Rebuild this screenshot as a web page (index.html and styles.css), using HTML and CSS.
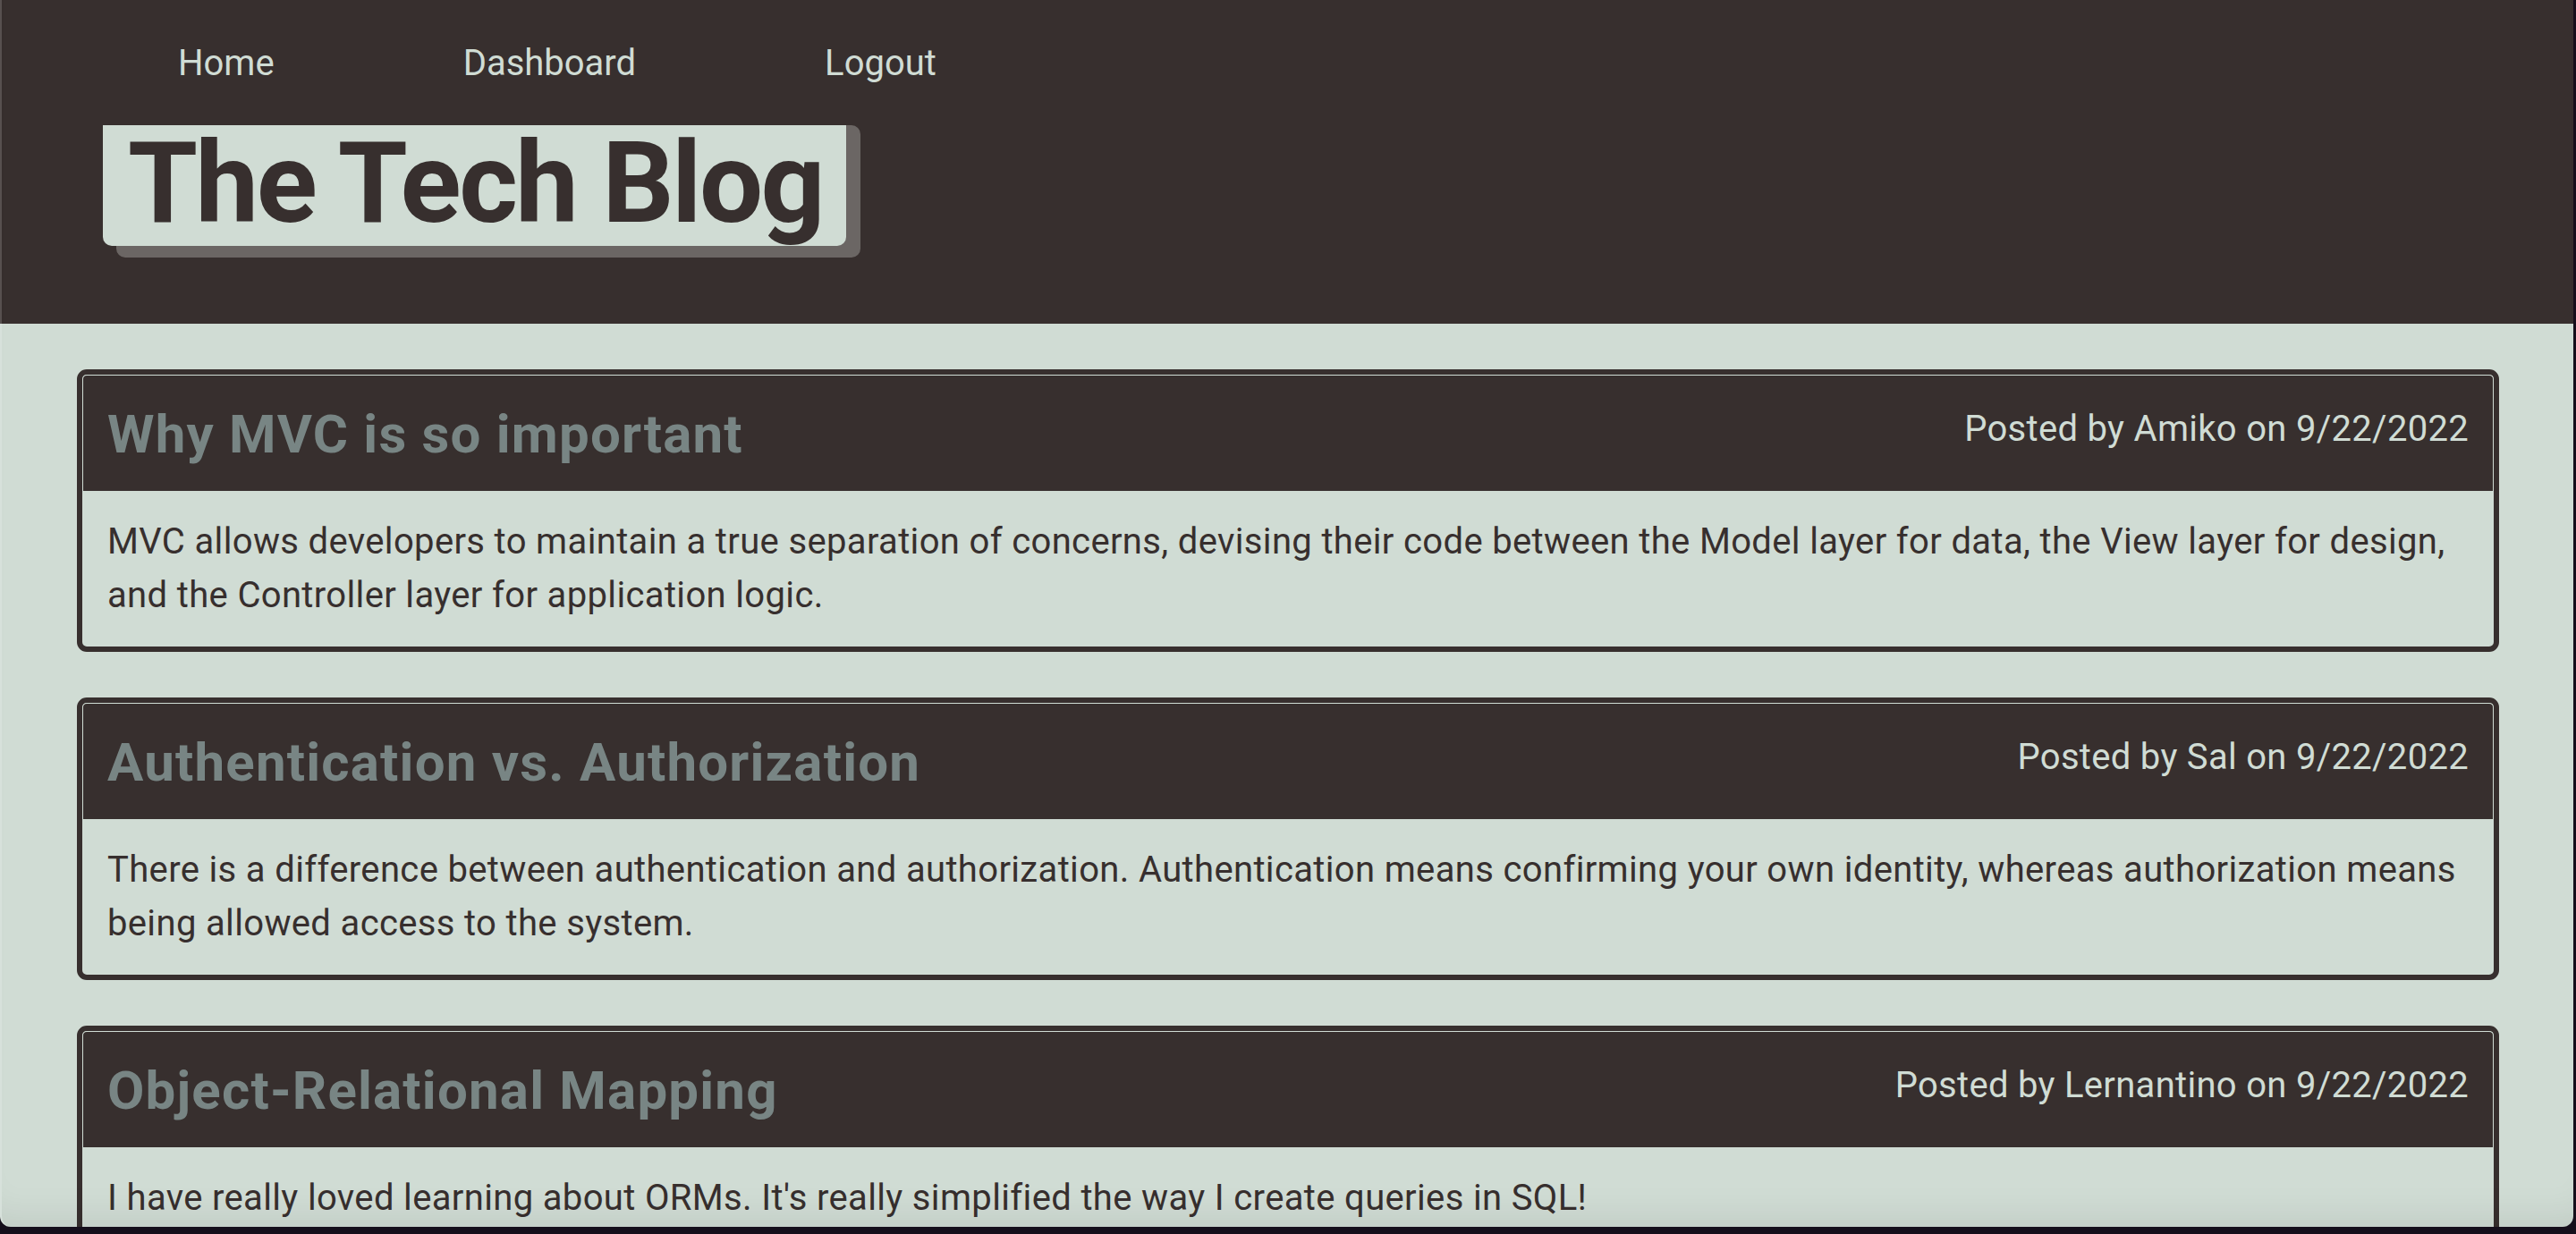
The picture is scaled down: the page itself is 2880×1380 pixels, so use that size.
FILE: index.html
```html
<!DOCTYPE html>
<html lang="en">
<head>
<meta charset="utf-8">
<title>The Tech Blog</title>
<link rel="stylesheet" href="styles.css">
</head>
<body>
<header class="site-header">
  <nav class="nav">
    <a class="nav-link" href="#">Home</a>
    <a class="nav-link" href="#">Dashboard</a>
    <a class="nav-link" href="#">Logout</a>
  </nav>
  <div class="brand-shadow">
    <h1 class="brand">The Tech Blog</h1>
  </div>
</header>
<main class="posts">
  <article class="card">
    <div class="card-header">
      <h2 class="card-title">Why MVC is so important</h2>
      <p class="card-meta">Posted by Amiko on 9/22/2022</p>
    </div>
    <div class="card-body">
      <p>MVC allows developers to maintain a true separation of concerns, devising their code between the Model layer for data, the View layer for design, and the Controller layer for application logic.</p>
    </div>
  </article>
  <article class="card">
    <div class="card-header">
      <h2 class="card-title">Authentication vs. Authorization</h2>
      <p class="card-meta">Posted by Sal on 9/22/2022</p>
    </div>
    <div class="card-body">
      <p>There is a difference between authentication and authorization. Authentication means confirming your own identity, whereas authorization means being allowed access to the system.</p>
    </div>
  </article>
  <article class="card">
    <div class="card-header">
      <h2 class="card-title">Object-Relational Mapping</h2>
      <p class="card-meta">Posted by Lernantino on 9/22/2022</p>
    </div>
    <div class="card-body">
      <p>I have really loved learning about ORMs. It's really simplified the way I create queries in SQL!</p>
    </div>
  </article>
</main>
<div class="window-frame"></div>
</body>
</html>
```
FILE: styles.css
```css
* { box-sizing: border-box; }

html, body {
  margin: 0;
  padding: 0;
}

body {
  background: #d0dcd4;
  color: #372f2e;
  font-family: Roboto, "Liberation Sans", sans-serif;
  font-size: 40px;
  line-height: 60px;
}

.site-header {
  background: #372f2e;
  height: 362px;
  padding: 41px 0 0 115px;
}

.nav {
  display: flex;
  gap: 211px;
  padding-left: 84px;
}

.nav-link {
  color: #d0dcd4;
  text-decoration: none;
  font-size: 40px;
  line-height: 60px;
}

.brand-shadow {
  display: inline-block;
  margin: 39px 0 0 15px;
  background: #6b6664;
  border-radius: 0 10px 10px 10px;
}

.brand {
  margin: 0 16px 13px -15px;
  background: #d0dcd4;
  color: #372f2e;
  font-size: 126px;
  font-weight: 700;
  line-height: 130px;
  letter-spacing: -2.5px;
  padding: 0 26px 5px 28px;
  border-radius: 0 0 10px 10px;
}

.posts {
  padding: 51px 86px 0;
  display: flex;
  flex-direction: column;
  gap: 51px;
}

.card {
  border: 6px solid #372f2e;
  border-radius: 11px;
  background: #d0dcd4;
}

.card-header {
  height: 130px;
  display: flex;
  justify-content: space-between;
  align-items: flex-start;
  background: #372f2e;
  border: 1px solid #d0dcd4;
  border-bottom: none;
  border-radius: 5px 5px 0 0;
  padding: 30px 27px 0;
}

.card-title {
  margin: 0;
  font-size: 60px;
  line-height: 72px;
  font-weight: 700;
  letter-spacing: 1.2px;
  color: #788584;
}

.card-meta {
  margin: 0;
  font-size: 40px;
  line-height: 60px;
  letter-spacing: 0.3px;
  color: #d0dcd4;
}

.card-body {
  padding: 27px 28px;
  letter-spacing: 0.35px;
}

.card-body p {
  margin: 0;
}

.window-frame {
  position: fixed;
  top: 0;
  left: 0;
  right: 3px;
  bottom: 8px;
  pointer-events: none;
  border-left: 2px solid rgba(255, 255, 255, 0.16);
  border-radius: 0 0 12px 12px;
  box-shadow: 0 0 0 60px #150e1b, inset 0 -40px 40px -30px rgba(0, 0, 0, 0.08);
}
```
